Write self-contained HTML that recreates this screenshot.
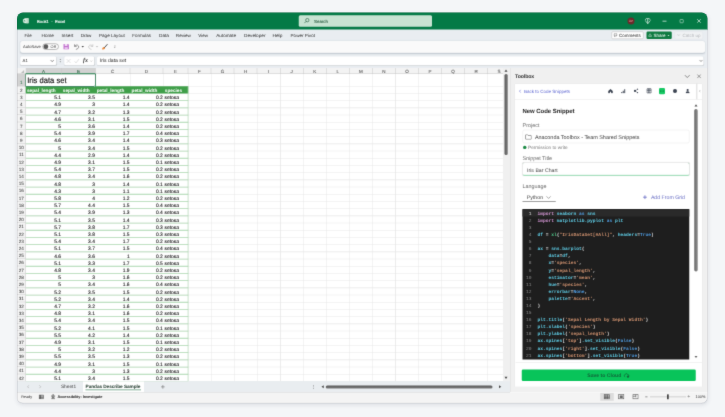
<!DOCTYPE html>
<html><head><meta charset="utf-8"><title>Excel</title>
<style>
*{box-sizing:border-box;margin:0;padding:0}
html,body{width:725px;height:417px;overflow:hidden}
#soften{position:absolute;left:0;top:0;width:725px;height:417px;filter:url(#soft)}
#scale{position:absolute;left:0;top:0;width:2900px;height:1668px;transform:scale(.25);transform-origin:0 0}
body{text-rendering:geometricPrecision;-webkit-font-smoothing:antialiased;background:#f4f6f8;font-family:"Liberation Sans",sans-serif;position:relative;color:#222}
.abs{position:absolute}
#win{position:absolute;left:68px;top:50px;width:2761.6px;height:1563.2px;border-radius:24px;overflow:hidden;background:#f0f0f0;box-shadow:0 6px 16px rgba(70,80,100,.14),0 0 4px rgba(100,110,130,.1)}
#inner{position:absolute;left:-68px;top:-50px;width:2900px;height:1668px}
.t{position:absolute;white-space:nowrap;line-height:1}
.menu{font-size:18px;color:#262626;top:131.6px}
.ch{position:absolute;top:272px;height:24px;font-size:18px;color:#262626;-webkit-text-stroke:0.24px #333;text-align:center;line-height:24.8px;border-right:2px solid #c9c9c9}
.rh{position:absolute;left:68px;width:34.8px;font-size:18.4px;color:#2c2c2c;text-align:center;border-bottom:2px solid #cfcfcf}
.vl{position:absolute;width:2.2px;background:#e6e6e6}
.hl{position:absolute;height:2.2px;background:#e6e6e6}
.c{position:absolute;font-size:19.6px;line-height:33.2px;height:28.8px;color:#111;white-space:nowrap;-webkit-text-stroke:0.4px #222}
.r{text-align:right;padding-right:2.4px}
.l{text-align:left;padding-left:4.8px}
.gh{position:absolute;font-size:18.8px;font-weight:bold;color:#fff;text-align:center;line-height:34.4px;height:28.8px;white-space:nowrap}
.code{position:absolute;left:2149.6px;font-family:"Liberation Mono",monospace;font-size:18.48px;line-height:28.34px;white-space:pre;color:#e0e0e0;font-weight:bold}
.ln{position:absolute;left:2090.4px;width:36px;text-align:right;font-family:"Liberation Mono",monospace;font-size:18.48px;line-height:28.34px;color:#8a8a8a;white-space:pre}
.k{color:#cc90cc}.v{color:#5fcde6}.b{color:#4f9be0}.s{color:#d0926f}.f{color:#4ec98a}.w{color:#d4d4d4}
.lbl{font-size:21.6px;color:#6a6a6a}
</style></head><body>
<svg width="0" height="0" style="position:absolute"><filter id="soft" x="0" y="0" width="100%" height="100%" color-interpolation-filters="sRGB"><feConvolveMatrix order="3" kernelMatrix="0.018 0.135 0.018 0.135 1 0.135 0.018 0.135 0.018" edgeMode="duplicate" preserveAlpha="true"/></filter></svg>
<div id="soften"><div id="scale"><div id="win"><div id="inner">

<div class="abs" style="left:68px;top:48px;width:2764px;height:71.6px;background:#047a46"></div>
<svg class="abs" style="left:90.4px;top:71.6px" width="25.6" height="22.8" viewBox="0 0 15 14"><rect x="4" y="0.5" width="10.5" height="13" rx="1" fill="#e6f2ea"/><rect x="9" y="0.5" width="5.5" height="13" fill="#b9dcc6"/><rect x="0.5" y="3" width="8" height="8" rx="1" fill="#e9f5ee"/><path d="M2.5 4.8 L6.5 9.2 M6.5 4.8 L2.5 9.2" stroke="#0b7a41" stroke-width="1.3"/></svg>
<div class="t" style="left:148px;top:78px;font-size:16.8px;color:#fff;-webkit-text-stroke:0.48px #fff">Book1&nbsp; -&nbsp; Excel</div>
<div class="abs" style="left:1195.2px;top:61.2px;width:532.4px;height:46px;border-radius:6px;background:#c8e3d2"></div>
<svg class="abs" style="left:1215.2px;top:71.2px" width="24" height="24" viewBox="0 0 10 10"><circle cx="6" cy="4" r="2.8" fill="none" stroke="#2a6145" stroke-width="1.1"/><path d="M4 6 L1 9" stroke="#2a6145" stroke-width="1.1"/></svg>
<div class="t" style="left:1256px;top:76px;font-size:17.6px;color:#2a5d42;-webkit-text-stroke:0.32px #2a5d42">Search</div>
<div class="abs" style="left:2509.6px;top:69.6px;width:28.8px;height:28.8px;border-radius:50%;background:#6c2a2b"></div>
<div class="t" style="left:2514.8px;top:78.4px;font-size:12.4px;color:#e7a3a3">OP</div>
<svg class="abs" style="left:2579.2px;top:72px" width="24" height="24" viewBox="0 0 12 12"><path d="M3 1 H9 L11.5 4.5 L6 11.5 L0.5 4.5 Z" fill="none" stroke="#e4f3ea" stroke-width="1.3"/><path d="M6 2 V11" stroke="#e4f3ea" stroke-width="1.6"/></svg>
<div class="abs" style="left:2650.4px;top:82.8px;width:16px;height:2.8px;background:#dff0e6"></div>
<div class="abs" style="left:2718.8px;top:76.8px;width:15.2px;height:15.2px;border:2.8px solid #dff0e6;border-radius:3.2px"></div>
<svg class="abs" style="left:2787.2px;top:75.2px" width="17.6" height="17.6" viewBox="0 0 10 10"><path d="M1 1 L9 9 M9 1 L1 9" stroke="#e8f5ed" stroke-width="1.6"/></svg>
<div class="abs" style="left:68px;top:118.4px;width:2764px;height:153.6px;background:#e9edf1"></div>
<div class="t menu" style="left:78.4px;width:68px;text-align:center"><span style="display:inline-block;transform:scaleX(0.966)">File</span></div>
<div class="t menu" style="left:146px;width:89.6px;text-align:center"><span style="display:inline-block;transform:scaleX(1.033)">Home</span></div>
<div class="t menu" style="left:225.6px;width:87.6px;text-align:center"><span style="display:inline-block;transform:scaleX(1.057)">Insert</span></div>
<div class="t menu" style="left:302.8px;width:82.4px;text-align:center"><span style="display:inline-block;transform:scaleX(1.010)">Draw</span></div>
<div class="t menu" style="left:376.4px;width:143.2px;text-align:center"><span style="display:inline-block;transform:scaleX(1.021)">Page Layout</span></div>
<div class="t menu" style="left:510px;width:114px;text-align:center"><span style="display:inline-block;transform:scaleX(0.987)">Formulas</span></div>
<div class="t menu" style="left:616px;width:80px;text-align:center"><span style="display:inline-block;transform:scaleX(1.052)">Data</span></div>
<div class="t menu" style="left:684px;width:100px;text-align:center"><span style="display:inline-block;transform:scaleX(1.017)">Review</span></div>
<div class="t menu" style="left:772.8px;width:78.8px;text-align:center"><span style="display:inline-block;transform:scaleX(0.995)">View</span></div>
<div class="t menu" style="left:844.8px;width:119.6px;text-align:center"><span style="display:inline-block;transform:scaleX(1.033)">Automate</span></div>
<div class="t menu" style="left:956.4px;width:125.6px;text-align:center"><span style="display:inline-block;transform:scaleX(1.044)">Developer</span></div>
<div class="t menu" style="left:1070px;width:80px;text-align:center"><span style="display:inline-block;transform:scaleX(1.081)">Help</span></div>
<div class="t menu" style="left:1142px;width:137.6px;text-align:center"><span style="display:inline-block;transform:scaleX(1.016)">Power Pivot</span></div>
<div class="abs" style="left:2445.6px;top:126px;width:128px;height:30.4px;border:2px solid #bdbdbd;border-radius:4.8px;background:#fff"></div>
<svg class="abs" style="left:2454px;top:132.8px" width="16" height="16" viewBox="0 0 8 8"><path d="M1 1 H7 V5 H4 L2.5 6.8 V5 H1 Z" fill="none" stroke="#444" stroke-width=".9"/></svg>
<div class="t" style="left:2476px;top:132px;font-size:18px;color:#222">Comments</div>
<div class="abs" style="left:2586px;top:126px;width:101.2px;height:30.4px;border-radius:4.8px;background:#0f7b41"></div>
<svg class="abs" style="left:2593.2px;top:132.8px" width="16" height="16" viewBox="0 0 8 8"><path d="M1 3.5 V7 H6 V3.5 M3.5 5 V1 M2 2.5 L3.5 1 L5 2.5" fill="none" stroke="#fff" stroke-width=".9"/></svg>
<div class="t" style="left:2614.4px;top:132px;font-size:18px;color:#fff">Share</div>
<div class="abs" style="left:2670.4px;top:140px;width:0;height:0;border-left:4px solid transparent;border-right:4px solid transparent;border-top:4.8px solid #fff"></div>
<div class="abs" style="left:2698.8px;top:126px;width:112px;height:30.4px;border-radius:4.8px;background:#f0f2f4;border:1.6px solid #dde0e4"></div>
<svg class="abs" style="left:2706.4px;top:134.4px" width="16" height="13.6" viewBox="0 0 8 7"><path d="M.5 4 L2.5 2 L4.5 4.5 L7.5 1.5" fill="none" stroke="#b9bbbf" stroke-width=".9"/></svg><div class="t" style="left:2730px;top:132px;font-size:18px;color:#b4b6ba">Catch up</div>
<div class="abs" style="left:80.8px;top:164px;width:2738.8px;height:47.2px;border-radius:10px;background:#fafafa;box-shadow:0 3.2px 5.6px rgba(40,60,80,.2)"></div>
<div class="t" style="left:92px;top:178.8px;font-size:16.4px;color:#333">AutoSave</div>
<div class="abs" style="left:170.4px;top:173.6px;width:64.8px;height:25.6px;border:2.2px solid #7c7c7c;border-radius:12.8px;background:#fcfcfc"></div>
<div class="abs" style="left:174.4px;top:177.2px;width:18.4px;height:18.4px;border-radius:50%;background:#5a5a5a"></div>
<div class="t" style="left:202.4px;top:179.6px;font-size:15.6px;color:#444">Off</div>
<svg class="abs" style="left:252px;top:174.4px" width="25.6" height="25.6" viewBox="0 0 12 12"><path d="M1 1 H9.5 L11 2.5 V11 H1 Z" fill="#c070cc"/><rect x="3.2" y="1" width="5" height="3.4" fill="#f6e6f8"/><rect x="3" y="6.8" width="6" height="4.2" fill="#e9c4ef"/></svg>
<svg class="abs" style="left:293.6px;top:174.4px" width="25.6" height="25.6" viewBox="0 0 12 12"><path d="M2 1.5 V5.5 H6 M2.3 5.2 C4 2.5 8 2 9.5 4.8 C11 8 7.5 10.5 4.5 11" fill="none" stroke="#454545" stroke-width="1"/></svg>
<div class="abs" style="left:326.4px;top:183.6px;width:0;height:0;border-left:5.2px solid transparent;border-right:5.2px solid transparent;border-top:6px solid #4a4a4a"></div>
<svg class="abs" style="left:350.4px;top:174.4px" width="25.6" height="25.6" viewBox="0 0 12 12"><path d="M10 1.5 V5.5 H6 M9.7 5.2 C8 2.5 4 2 2.5 4.8 C1 8 4.5 10.5 7.5 11" fill="none" stroke="#b5b5b5" stroke-width="1.1"/></svg>
<div class="abs" style="left:383.2px;top:183.6px;width:0;height:0;border-left:5.2px solid transparent;border-right:5.2px solid transparent;border-top:6px solid #c4c4c4"></div>
<svg class="abs" style="left:405.6px;top:173.6px" width="26.4" height="26.4" viewBox="0 0 12 12"><path d="M1.2 11 C.8 7.8 3.6 5.6 6 7 C7.6 9.6 5 11.6 1.2 11 Z" fill="#ee8a3a"/><path d="M5.6 7.2 L10.4 1.8" stroke="#4a4a4a" stroke-width="1.8" stroke-linecap="round"/></svg>
<div class="abs" style="left:456px;top:182.8px;width:7.2px;height:1.8px;background:#888"></div>
<div class="abs" style="left:456px;top:188.4px;width:0;height:0;border-left:3.2px solid transparent;border-right:3.2px solid transparent;border-top:4px solid #888"></div>
<div class="abs" style="left:81.2px;top:226px;width:143.6px;height:34.4px;border-radius:6px;background:#fff;box-shadow:0 2px 3.2px rgba(0,0,0,.12)"></div>
<div class="t" style="left:90.4px;top:235.2px;font-size:17.2px;color:#333">A1</div>
<svg class="abs" style="left:200px;top:238.4px" width="17.6" height="11.6" viewBox="0 0 7 5"><path d="M.7 .8 L3.5 3.8 L6.3 .8" fill="none" stroke="#444" stroke-width="1"/></svg>
<div class="abs" style="left:239.2px;top:236.4px;width:3.6px;height:3.6px;border-radius:50%;background:#555"></div><div class="abs" style="left:239.2px;top:245.2px;width:3.6px;height:3.6px;border-radius:50%;background:#555"></div>
<div class="abs" style="left:256.8px;top:226.4px;width:120px;height:34.4px;border-radius:6px;background:#fff;box-shadow:0 2px 3.2px rgba(0,0,0,.12)"></div>
<svg class="abs" style="left:263.6px;top:234px" width="20" height="20" viewBox="0 0 8 8"><path d="M1 1 L7 7 M7 1 L1 7" stroke="#c2c2c2" stroke-width=".8"/></svg>
<svg class="abs" style="left:295.2px;top:233.6px" width="24" height="20" viewBox="0 0 9 8"><path d="M1 4.5 L3.3 7 L8 1" fill="none" stroke="#c2c2c2" stroke-width=".8"/></svg>
<div class="t" style="left:332px;top:230.4px;font-size:23.6px;font-style:italic;font-weight:bold;font-family:'Liberation Serif',serif;color:#333">fx</div>
<svg class="abs" style="left:359.2px;top:239.6px" width="12" height="8.8" viewBox="0 0 7 5"><path d="M.7 .8 L3.5 3.8 L6.3 .8" fill="none" stroke="#999" stroke-width=".9"/></svg>
<div class="abs" style="left:388px;top:226.4px;width:2426.4px;height:34.4px;border-radius:6px;background:#fff;box-shadow:0 2px 3.2px rgba(0,0,0,.12)"></div>
<div class="t" style="left:399.2px;top:232px;font-size:20.4px;color:#2a2a2a">Iris data set</div>
<svg class="abs" style="left:2796px;top:238.4px" width="16" height="10.8" viewBox="0 0 7 5"><path d="M.7 .8 L3.5 3.8 L6.3 .8" fill="none" stroke="#4a4a4a" stroke-width="1"/></svg>
<div class="abs" style="left:68px;top:272px;width:1944px;height:1253.2px;background:#fff"></div>
<div class="abs" style="left:68px;top:272px;width:1944px;height:24px;background:#f3f3f3;border-bottom:2px solid #c9c9c9"></div>
<div class="abs" style="left:68px;top:296px;width:34.8px;height:1229.2px;background:#f3f3f3;border-right:2px solid #c9c9c9"></div>
<svg class="abs" style="left:82px;top:278px" width="16" height="16" viewBox="0 0 8 8"><path d="M7.5 .5 V7.5 H.5 Z" fill="#bdbdbd"/></svg>
<div class="abs" style="left:102.8px;top:272px;width:279.2px;height:24px;background:#d2d2d2;border-bottom:3.2px solid #107c41"></div>
<div class="ch" style="left:102.8px;width:143.6px;color:#1e6b3f">A</div>
<div class="ch" style="left:246.4px;width:135.6px;color:#1e6b3f">B</div>
<div class="ch" style="left:382px;width:138.8px;color:#555">C</div>
<div class="ch" style="left:520.8px;width:132.4px;color:#555">D</div>
<div class="ch" style="left:653.2px;width:99.6px;color:#555">E</div>
<div class="ch" style="left:752.8px;width:92.2px;color:#555">F</div>
<div class="ch" style="left:845px;width:92.2px;color:#555">G</div>
<div class="ch" style="left:937.2px;width:92.2px;color:#555">H</div>
<div class="ch" style="left:1029.4px;width:92.2px;color:#555">I</div>
<div class="ch" style="left:1121.6px;width:92.2px;color:#555">J</div>
<div class="ch" style="left:1213.8px;width:92.2px;color:#555">K</div>
<div class="ch" style="left:1306px;width:92.2px;color:#555">L</div>
<div class="ch" style="left:1398.2px;width:92.2px;color:#555">M</div>
<div class="ch" style="left:1490.4px;width:92.2px;color:#555">N</div>
<div class="ch" style="left:1582.6px;width:92.2px;color:#555">O</div>
<div class="ch" style="left:1674.8px;width:92.2px;color:#555">P</div>
<div class="ch" style="left:1767px;width:92.2px;color:#555">Q</div>
<div class="ch" style="left:1859.2px;width:92.2px;color:#555">R</div>
<div class="ch" style="left:1951.4px;width:92.2px;color:#555">S</div>
<div class="vl" style="left:245.2px;top:296px;height:49.2px"></div>
<div class="vl" style="left:380.8px;top:296px;height:49.2px"></div>
<div class="vl" style="left:519.6px;top:296px;height:49.2px"></div>
<div class="vl" style="left:652px;top:296px;height:49.2px"></div>
<div class="vl" style="left:751.6px;top:296px;height:1229.2px"></div>
<div class="vl" style="left:843.8px;top:296px;height:1229.2px"></div>
<div class="vl" style="left:936px;top:296px;height:1229.2px"></div>
<div class="vl" style="left:1028.2px;top:296px;height:1229.2px"></div>
<div class="vl" style="left:1120.4px;top:296px;height:1229.2px"></div>
<div class="vl" style="left:1212.6px;top:296px;height:1229.2px"></div>
<div class="vl" style="left:1304.8px;top:296px;height:1229.2px"></div>
<div class="vl" style="left:1397px;top:296px;height:1229.2px"></div>
<div class="vl" style="left:1489.2px;top:296px;height:1229.2px"></div>
<div class="vl" style="left:1581.4px;top:296px;height:1229.2px"></div>
<div class="vl" style="left:1673.6px;top:296px;height:1229.2px"></div>
<div class="vl" style="left:1765.8px;top:296px;height:1229.2px"></div>
<div class="vl" style="left:1858px;top:296px;height:1229.2px"></div>
<div class="vl" style="left:1950.2px;top:296px;height:1229.2px"></div>
<div class="hl" style="left:102.8px;top:344px;width:1909.2px"></div>
<div class="rh" style="top:296px;height:49.2px;line-height:63.2px; background:#d2d2d2;color:#1e6b3f;">1</div>
<div class="hl" style="left:102.8px;top:372.8px;width:1909.2px"></div>
<div class="rh" style="top:345.2px;height:28.8px;line-height:30.4px;">2</div>
<div class="hl" style="left:102.8px;top:401.6px;width:1909.2px"></div>
<div class="rh" style="top:374px;height:28.8px;line-height:30.4px;">3</div>
<div class="hl" style="left:102.8px;top:430.4px;width:1909.2px"></div>
<div class="rh" style="top:402.8px;height:28.8px;line-height:30.4px;">4</div>
<div class="hl" style="left:102.8px;top:459.2px;width:1909.2px"></div>
<div class="rh" style="top:431.6px;height:28.8px;line-height:30.4px;">5</div>
<div class="hl" style="left:102.8px;top:488px;width:1909.2px"></div>
<div class="rh" style="top:460.4px;height:28.8px;line-height:30.4px;">6</div>
<div class="hl" style="left:102.8px;top:516.8px;width:1909.2px"></div>
<div class="rh" style="top:489.2px;height:28.8px;line-height:30.4px;">7</div>
<div class="hl" style="left:102.8px;top:545.6px;width:1909.2px"></div>
<div class="rh" style="top:518px;height:28.8px;line-height:30.4px;">8</div>
<div class="hl" style="left:102.8px;top:574.4px;width:1909.2px"></div>
<div class="rh" style="top:546.8px;height:28.8px;line-height:30.4px;">9</div>
<div class="hl" style="left:102.8px;top:603.2px;width:1909.2px"></div>
<div class="rh" style="top:575.6px;height:28.8px;line-height:30.4px;">10</div>
<div class="hl" style="left:102.8px;top:632px;width:1909.2px"></div>
<div class="rh" style="top:604.4px;height:28.8px;line-height:30.4px;">11</div>
<div class="hl" style="left:102.8px;top:660.8px;width:1909.2px"></div>
<div class="rh" style="top:633.2px;height:28.8px;line-height:30.4px;">12</div>
<div class="hl" style="left:102.8px;top:689.6px;width:1909.2px"></div>
<div class="rh" style="top:662px;height:28.8px;line-height:30.4px;">13</div>
<div class="hl" style="left:102.8px;top:718.4px;width:1909.2px"></div>
<div class="rh" style="top:690.8px;height:28.8px;line-height:30.4px;">14</div>
<div class="hl" style="left:102.8px;top:747.2px;width:1909.2px"></div>
<div class="rh" style="top:719.6px;height:28.8px;line-height:30.4px;">15</div>
<div class="hl" style="left:102.8px;top:776px;width:1909.2px"></div>
<div class="rh" style="top:748.4px;height:28.8px;line-height:30.4px;">16</div>
<div class="hl" style="left:102.8px;top:804.8px;width:1909.2px"></div>
<div class="rh" style="top:777.2px;height:28.8px;line-height:30.4px;">17</div>
<div class="hl" style="left:102.8px;top:833.6px;width:1909.2px"></div>
<div class="rh" style="top:806px;height:28.8px;line-height:30.4px;">18</div>
<div class="hl" style="left:102.8px;top:862.4px;width:1909.2px"></div>
<div class="rh" style="top:834.8px;height:28.8px;line-height:30.4px;">19</div>
<div class="hl" style="left:102.8px;top:891.2px;width:1909.2px"></div>
<div class="rh" style="top:863.6px;height:28.8px;line-height:30.4px;">20</div>
<div class="hl" style="left:102.8px;top:920px;width:1909.2px"></div>
<div class="rh" style="top:892.4px;height:28.8px;line-height:30.4px;">21</div>
<div class="hl" style="left:102.8px;top:948.8px;width:1909.2px"></div>
<div class="rh" style="top:921.2px;height:28.8px;line-height:30.4px;">22</div>
<div class="hl" style="left:102.8px;top:977.6px;width:1909.2px"></div>
<div class="rh" style="top:950px;height:28.8px;line-height:30.4px;">23</div>
<div class="hl" style="left:102.8px;top:1006.4px;width:1909.2px"></div>
<div class="rh" style="top:978.8px;height:28.8px;line-height:30.4px;">24</div>
<div class="hl" style="left:102.8px;top:1035.2px;width:1909.2px"></div>
<div class="rh" style="top:1007.6px;height:28.8px;line-height:30.4px;">25</div>
<div class="hl" style="left:102.8px;top:1064px;width:1909.2px"></div>
<div class="rh" style="top:1036.4px;height:28.8px;line-height:30.4px;">26</div>
<div class="hl" style="left:102.8px;top:1092.8px;width:1909.2px"></div>
<div class="rh" style="top:1065.2px;height:28.8px;line-height:30.4px;">27</div>
<div class="hl" style="left:102.8px;top:1121.6px;width:1909.2px"></div>
<div class="rh" style="top:1094px;height:28.8px;line-height:30.4px;">28</div>
<div class="hl" style="left:102.8px;top:1150.4px;width:1909.2px"></div>
<div class="rh" style="top:1122.8px;height:28.8px;line-height:30.4px;">29</div>
<div class="hl" style="left:102.8px;top:1179.2px;width:1909.2px"></div>
<div class="rh" style="top:1151.6px;height:28.8px;line-height:30.4px;">30</div>
<div class="hl" style="left:102.8px;top:1208px;width:1909.2px"></div>
<div class="rh" style="top:1180.4px;height:28.8px;line-height:30.4px;">31</div>
<div class="hl" style="left:102.8px;top:1236.8px;width:1909.2px"></div>
<div class="rh" style="top:1209.2px;height:28.8px;line-height:30.4px;">32</div>
<div class="hl" style="left:102.8px;top:1265.6px;width:1909.2px"></div>
<div class="rh" style="top:1238px;height:28.8px;line-height:30.4px;">33</div>
<div class="hl" style="left:102.8px;top:1294.4px;width:1909.2px"></div>
<div class="rh" style="top:1266.8px;height:28.8px;line-height:30.4px;">34</div>
<div class="hl" style="left:102.8px;top:1323.2px;width:1909.2px"></div>
<div class="rh" style="top:1295.6px;height:28.8px;line-height:30.4px;">35</div>
<div class="hl" style="left:102.8px;top:1352px;width:1909.2px"></div>
<div class="rh" style="top:1324.4px;height:28.8px;line-height:30.4px;">36</div>
<div class="hl" style="left:102.8px;top:1380.8px;width:1909.2px"></div>
<div class="rh" style="top:1353.2px;height:28.8px;line-height:30.4px;">37</div>
<div class="hl" style="left:102.8px;top:1409.6px;width:1909.2px"></div>
<div class="rh" style="top:1382px;height:28.8px;line-height:30.4px;">38</div>
<div class="hl" style="left:102.8px;top:1438.4px;width:1909.2px"></div>
<div class="rh" style="top:1410.8px;height:28.8px;line-height:30.4px;">39</div>
<div class="hl" style="left:102.8px;top:1467.2px;width:1909.2px"></div>
<div class="rh" style="top:1439.6px;height:28.8px;line-height:30.4px;">40</div>
<div class="hl" style="left:102.8px;top:1496px;width:1909.2px"></div>
<div class="rh" style="top:1468.4px;height:28.8px;line-height:30.4px;">41</div>
<div class="hl" style="left:102.8px;top:1524.8px;width:1909.2px"></div>
<div class="rh" style="top:1497.2px;height:28.8px;line-height:30.4px;">42</div>
<div class="abs" style="left:102.8px;top:345.2px;width:650px;height:28.8px;background:#3f9f49"></div>
<div class="gh" style="left:93.6px;top:345.2px;width:143.6px">sepal_length</div>
<div class="gh" style="left:237.2px;top:345.2px;width:135.6px">sepal_width</div>
<div class="gh" style="left:372.8px;top:345.2px;width:138.8px">petal_length</div>
<div class="gh" style="left:511.6px;top:345.2px;width:132.4px">petal_width</div>
<div class="gh" style="left:644px;top:345.2px;width:99.6px">species</div>
<div class="abs" style="left:102.8px;top:401px;width:650px;height:3.2px;background:#aedab2"></div>
<div class="c r" style="left:102.8px;top:374px;width:143.6px">5.1</div>
<div class="c r" style="left:246.4px;top:374px;width:135.6px">3.5</div>
<div class="c r" style="left:382px;top:374px;width:138.8px">1.4</div>
<div class="c r" style="left:520.8px;top:374px;width:132.4px">0.2</div>
<div class="c l" style="left:653.2px;top:374px;width:99.6px">setosa</div>
<div class="abs" style="left:102.8px;top:429.8px;width:650px;height:3.2px;background:#aedab2"></div>
<div class="c r" style="left:102.8px;top:402.8px;width:143.6px">4.9</div>
<div class="c r" style="left:246.4px;top:402.8px;width:135.6px">3</div>
<div class="c r" style="left:382px;top:402.8px;width:138.8px">1.4</div>
<div class="c r" style="left:520.8px;top:402.8px;width:132.4px">0.2</div>
<div class="c l" style="left:653.2px;top:402.8px;width:99.6px">setosa</div>
<div class="abs" style="left:102.8px;top:458.6px;width:650px;height:3.2px;background:#aedab2"></div>
<div class="c r" style="left:102.8px;top:431.6px;width:143.6px">4.7</div>
<div class="c r" style="left:246.4px;top:431.6px;width:135.6px">3.2</div>
<div class="c r" style="left:382px;top:431.6px;width:138.8px">1.3</div>
<div class="c r" style="left:520.8px;top:431.6px;width:132.4px">0.2</div>
<div class="c l" style="left:653.2px;top:431.6px;width:99.6px">setosa</div>
<div class="abs" style="left:102.8px;top:487.4px;width:650px;height:3.2px;background:#aedab2"></div>
<div class="c r" style="left:102.8px;top:460.4px;width:143.6px">4.6</div>
<div class="c r" style="left:246.4px;top:460.4px;width:135.6px">3.1</div>
<div class="c r" style="left:382px;top:460.4px;width:138.8px">1.5</div>
<div class="c r" style="left:520.8px;top:460.4px;width:132.4px">0.2</div>
<div class="c l" style="left:653.2px;top:460.4px;width:99.6px">setosa</div>
<div class="abs" style="left:102.8px;top:516.2px;width:650px;height:3.2px;background:#aedab2"></div>
<div class="c r" style="left:102.8px;top:489.2px;width:143.6px">5</div>
<div class="c r" style="left:246.4px;top:489.2px;width:135.6px">3.6</div>
<div class="c r" style="left:382px;top:489.2px;width:138.8px">1.4</div>
<div class="c r" style="left:520.8px;top:489.2px;width:132.4px">0.2</div>
<div class="c l" style="left:653.2px;top:489.2px;width:99.6px">setosa</div>
<div class="abs" style="left:102.8px;top:545px;width:650px;height:3.2px;background:#aedab2"></div>
<div class="c r" style="left:102.8px;top:518px;width:143.6px">5.4</div>
<div class="c r" style="left:246.4px;top:518px;width:135.6px">3.9</div>
<div class="c r" style="left:382px;top:518px;width:138.8px">1.7</div>
<div class="c r" style="left:520.8px;top:518px;width:132.4px">0.4</div>
<div class="c l" style="left:653.2px;top:518px;width:99.6px">setosa</div>
<div class="abs" style="left:102.8px;top:573.8px;width:650px;height:3.2px;background:#aedab2"></div>
<div class="c r" style="left:102.8px;top:546.8px;width:143.6px">4.6</div>
<div class="c r" style="left:246.4px;top:546.8px;width:135.6px">3.4</div>
<div class="c r" style="left:382px;top:546.8px;width:138.8px">1.4</div>
<div class="c r" style="left:520.8px;top:546.8px;width:132.4px">0.3</div>
<div class="c l" style="left:653.2px;top:546.8px;width:99.6px">setosa</div>
<div class="abs" style="left:102.8px;top:602.6px;width:650px;height:3.2px;background:#aedab2"></div>
<div class="c r" style="left:102.8px;top:575.6px;width:143.6px">5</div>
<div class="c r" style="left:246.4px;top:575.6px;width:135.6px">3.4</div>
<div class="c r" style="left:382px;top:575.6px;width:138.8px">1.5</div>
<div class="c r" style="left:520.8px;top:575.6px;width:132.4px">0.2</div>
<div class="c l" style="left:653.2px;top:575.6px;width:99.6px">setosa</div>
<div class="abs" style="left:102.8px;top:631.4px;width:650px;height:3.2px;background:#aedab2"></div>
<div class="c r" style="left:102.8px;top:604.4px;width:143.6px">4.4</div>
<div class="c r" style="left:246.4px;top:604.4px;width:135.6px">2.9</div>
<div class="c r" style="left:382px;top:604.4px;width:138.8px">1.4</div>
<div class="c r" style="left:520.8px;top:604.4px;width:132.4px">0.2</div>
<div class="c l" style="left:653.2px;top:604.4px;width:99.6px">setosa</div>
<div class="abs" style="left:102.8px;top:660.2px;width:650px;height:3.2px;background:#aedab2"></div>
<div class="c r" style="left:102.8px;top:633.2px;width:143.6px">4.9</div>
<div class="c r" style="left:246.4px;top:633.2px;width:135.6px">3.1</div>
<div class="c r" style="left:382px;top:633.2px;width:138.8px">1.5</div>
<div class="c r" style="left:520.8px;top:633.2px;width:132.4px">0.1</div>
<div class="c l" style="left:653.2px;top:633.2px;width:99.6px">setosa</div>
<div class="abs" style="left:102.8px;top:689px;width:650px;height:3.2px;background:#aedab2"></div>
<div class="c r" style="left:102.8px;top:662px;width:143.6px">5.4</div>
<div class="c r" style="left:246.4px;top:662px;width:135.6px">3.7</div>
<div class="c r" style="left:382px;top:662px;width:138.8px">1.5</div>
<div class="c r" style="left:520.8px;top:662px;width:132.4px">0.2</div>
<div class="c l" style="left:653.2px;top:662px;width:99.6px">setosa</div>
<div class="abs" style="left:102.8px;top:717.8px;width:650px;height:3.2px;background:#aedab2"></div>
<div class="c r" style="left:102.8px;top:690.8px;width:143.6px">4.8</div>
<div class="c r" style="left:246.4px;top:690.8px;width:135.6px">3.4</div>
<div class="c r" style="left:382px;top:690.8px;width:138.8px">1.6</div>
<div class="c r" style="left:520.8px;top:690.8px;width:132.4px">0.2</div>
<div class="c l" style="left:653.2px;top:690.8px;width:99.6px">setosa</div>
<div class="abs" style="left:102.8px;top:746.6px;width:650px;height:3.2px;background:#aedab2"></div>
<div class="c r" style="left:102.8px;top:719.6px;width:143.6px">4.8</div>
<div class="c r" style="left:246.4px;top:719.6px;width:135.6px">3</div>
<div class="c r" style="left:382px;top:719.6px;width:138.8px">1.4</div>
<div class="c r" style="left:520.8px;top:719.6px;width:132.4px">0.1</div>
<div class="c l" style="left:653.2px;top:719.6px;width:99.6px">setosa</div>
<div class="abs" style="left:102.8px;top:775.4px;width:650px;height:3.2px;background:#aedab2"></div>
<div class="c r" style="left:102.8px;top:748.4px;width:143.6px">4.3</div>
<div class="c r" style="left:246.4px;top:748.4px;width:135.6px">3</div>
<div class="c r" style="left:382px;top:748.4px;width:138.8px">1.1</div>
<div class="c r" style="left:520.8px;top:748.4px;width:132.4px">0.1</div>
<div class="c l" style="left:653.2px;top:748.4px;width:99.6px">setosa</div>
<div class="abs" style="left:102.8px;top:804.2px;width:650px;height:3.2px;background:#aedab2"></div>
<div class="c r" style="left:102.8px;top:777.2px;width:143.6px">5.8</div>
<div class="c r" style="left:246.4px;top:777.2px;width:135.6px">4</div>
<div class="c r" style="left:382px;top:777.2px;width:138.8px">1.2</div>
<div class="c r" style="left:520.8px;top:777.2px;width:132.4px">0.2</div>
<div class="c l" style="left:653.2px;top:777.2px;width:99.6px">setosa</div>
<div class="abs" style="left:102.8px;top:833px;width:650px;height:3.2px;background:#aedab2"></div>
<div class="c r" style="left:102.8px;top:806px;width:143.6px">5.7</div>
<div class="c r" style="left:246.4px;top:806px;width:135.6px">4.4</div>
<div class="c r" style="left:382px;top:806px;width:138.8px">1.5</div>
<div class="c r" style="left:520.8px;top:806px;width:132.4px">0.4</div>
<div class="c l" style="left:653.2px;top:806px;width:99.6px">setosa</div>
<div class="abs" style="left:102.8px;top:861.8px;width:650px;height:3.2px;background:#aedab2"></div>
<div class="c r" style="left:102.8px;top:834.8px;width:143.6px">5.4</div>
<div class="c r" style="left:246.4px;top:834.8px;width:135.6px">3.9</div>
<div class="c r" style="left:382px;top:834.8px;width:138.8px">1.3</div>
<div class="c r" style="left:520.8px;top:834.8px;width:132.4px">0.4</div>
<div class="c l" style="left:653.2px;top:834.8px;width:99.6px">setosa</div>
<div class="abs" style="left:102.8px;top:890.6px;width:650px;height:3.2px;background:#aedab2"></div>
<div class="c r" style="left:102.8px;top:863.6px;width:143.6px">5.1</div>
<div class="c r" style="left:246.4px;top:863.6px;width:135.6px">3.5</div>
<div class="c r" style="left:382px;top:863.6px;width:138.8px">1.4</div>
<div class="c r" style="left:520.8px;top:863.6px;width:132.4px">0.3</div>
<div class="c l" style="left:653.2px;top:863.6px;width:99.6px">setosa</div>
<div class="abs" style="left:102.8px;top:919.4px;width:650px;height:3.2px;background:#aedab2"></div>
<div class="c r" style="left:102.8px;top:892.4px;width:143.6px">5.7</div>
<div class="c r" style="left:246.4px;top:892.4px;width:135.6px">3.8</div>
<div class="c r" style="left:382px;top:892.4px;width:138.8px">1.7</div>
<div class="c r" style="left:520.8px;top:892.4px;width:132.4px">0.3</div>
<div class="c l" style="left:653.2px;top:892.4px;width:99.6px">setosa</div>
<div class="abs" style="left:102.8px;top:948.2px;width:650px;height:3.2px;background:#aedab2"></div>
<div class="c r" style="left:102.8px;top:921.2px;width:143.6px">5.1</div>
<div class="c r" style="left:246.4px;top:921.2px;width:135.6px">3.8</div>
<div class="c r" style="left:382px;top:921.2px;width:138.8px">1.5</div>
<div class="c r" style="left:520.8px;top:921.2px;width:132.4px">0.3</div>
<div class="c l" style="left:653.2px;top:921.2px;width:99.6px">setosa</div>
<div class="abs" style="left:102.8px;top:977px;width:650px;height:3.2px;background:#aedab2"></div>
<div class="c r" style="left:102.8px;top:950px;width:143.6px">5.4</div>
<div class="c r" style="left:246.4px;top:950px;width:135.6px">3.4</div>
<div class="c r" style="left:382px;top:950px;width:138.8px">1.7</div>
<div class="c r" style="left:520.8px;top:950px;width:132.4px">0.2</div>
<div class="c l" style="left:653.2px;top:950px;width:99.6px">setosa</div>
<div class="abs" style="left:102.8px;top:1005.8px;width:650px;height:3.2px;background:#aedab2"></div>
<div class="c r" style="left:102.8px;top:978.8px;width:143.6px">5.1</div>
<div class="c r" style="left:246.4px;top:978.8px;width:135.6px">3.7</div>
<div class="c r" style="left:382px;top:978.8px;width:138.8px">1.5</div>
<div class="c r" style="left:520.8px;top:978.8px;width:132.4px">0.4</div>
<div class="c l" style="left:653.2px;top:978.8px;width:99.6px">setosa</div>
<div class="abs" style="left:102.8px;top:1034.6px;width:650px;height:3.2px;background:#aedab2"></div>
<div class="c r" style="left:102.8px;top:1007.6px;width:143.6px">4.6</div>
<div class="c r" style="left:246.4px;top:1007.6px;width:135.6px">3.6</div>
<div class="c r" style="left:382px;top:1007.6px;width:138.8px">1</div>
<div class="c r" style="left:520.8px;top:1007.6px;width:132.4px">0.2</div>
<div class="c l" style="left:653.2px;top:1007.6px;width:99.6px">setosa</div>
<div class="abs" style="left:102.8px;top:1063.4px;width:650px;height:3.2px;background:#aedab2"></div>
<div class="c r" style="left:102.8px;top:1036.4px;width:143.6px">5.1</div>
<div class="c r" style="left:246.4px;top:1036.4px;width:135.6px">3.3</div>
<div class="c r" style="left:382px;top:1036.4px;width:138.8px">1.7</div>
<div class="c r" style="left:520.8px;top:1036.4px;width:132.4px">0.5</div>
<div class="c l" style="left:653.2px;top:1036.4px;width:99.6px">setosa</div>
<div class="abs" style="left:102.8px;top:1092.2px;width:650px;height:3.2px;background:#aedab2"></div>
<div class="c r" style="left:102.8px;top:1065.2px;width:143.6px">4.8</div>
<div class="c r" style="left:246.4px;top:1065.2px;width:135.6px">3.4</div>
<div class="c r" style="left:382px;top:1065.2px;width:138.8px">1.9</div>
<div class="c r" style="left:520.8px;top:1065.2px;width:132.4px">0.2</div>
<div class="c l" style="left:653.2px;top:1065.2px;width:99.6px">setosa</div>
<div class="abs" style="left:102.8px;top:1121px;width:650px;height:3.2px;background:#aedab2"></div>
<div class="c r" style="left:102.8px;top:1094px;width:143.6px">5</div>
<div class="c r" style="left:246.4px;top:1094px;width:135.6px">3</div>
<div class="c r" style="left:382px;top:1094px;width:138.8px">1.6</div>
<div class="c r" style="left:520.8px;top:1094px;width:132.4px">0.2</div>
<div class="c l" style="left:653.2px;top:1094px;width:99.6px">setosa</div>
<div class="abs" style="left:102.8px;top:1149.8px;width:650px;height:3.2px;background:#aedab2"></div>
<div class="c r" style="left:102.8px;top:1122.8px;width:143.6px">5</div>
<div class="c r" style="left:246.4px;top:1122.8px;width:135.6px">3.4</div>
<div class="c r" style="left:382px;top:1122.8px;width:138.8px">1.6</div>
<div class="c r" style="left:520.8px;top:1122.8px;width:132.4px">0.4</div>
<div class="c l" style="left:653.2px;top:1122.8px;width:99.6px">setosa</div>
<div class="abs" style="left:102.8px;top:1178.6px;width:650px;height:3.2px;background:#aedab2"></div>
<div class="c r" style="left:102.8px;top:1151.6px;width:143.6px">5.2</div>
<div class="c r" style="left:246.4px;top:1151.6px;width:135.6px">3.5</div>
<div class="c r" style="left:382px;top:1151.6px;width:138.8px">1.5</div>
<div class="c r" style="left:520.8px;top:1151.6px;width:132.4px">0.2</div>
<div class="c l" style="left:653.2px;top:1151.6px;width:99.6px">setosa</div>
<div class="abs" style="left:102.8px;top:1207.4px;width:650px;height:3.2px;background:#aedab2"></div>
<div class="c r" style="left:102.8px;top:1180.4px;width:143.6px">5.2</div>
<div class="c r" style="left:246.4px;top:1180.4px;width:135.6px">3.4</div>
<div class="c r" style="left:382px;top:1180.4px;width:138.8px">1.4</div>
<div class="c r" style="left:520.8px;top:1180.4px;width:132.4px">0.2</div>
<div class="c l" style="left:653.2px;top:1180.4px;width:99.6px">setosa</div>
<div class="abs" style="left:102.8px;top:1236.2px;width:650px;height:3.2px;background:#aedab2"></div>
<div class="c r" style="left:102.8px;top:1209.2px;width:143.6px">4.7</div>
<div class="c r" style="left:246.4px;top:1209.2px;width:135.6px">3.2</div>
<div class="c r" style="left:382px;top:1209.2px;width:138.8px">1.6</div>
<div class="c r" style="left:520.8px;top:1209.2px;width:132.4px">0.2</div>
<div class="c l" style="left:653.2px;top:1209.2px;width:99.6px">setosa</div>
<div class="abs" style="left:102.8px;top:1265px;width:650px;height:3.2px;background:#aedab2"></div>
<div class="c r" style="left:102.8px;top:1238px;width:143.6px">4.8</div>
<div class="c r" style="left:246.4px;top:1238px;width:135.6px">3.1</div>
<div class="c r" style="left:382px;top:1238px;width:138.8px">1.6</div>
<div class="c r" style="left:520.8px;top:1238px;width:132.4px">0.2</div>
<div class="c l" style="left:653.2px;top:1238px;width:99.6px">setosa</div>
<div class="abs" style="left:102.8px;top:1293.8px;width:650px;height:3.2px;background:#aedab2"></div>
<div class="c r" style="left:102.8px;top:1266.8px;width:143.6px">5.4</div>
<div class="c r" style="left:246.4px;top:1266.8px;width:135.6px">3.4</div>
<div class="c r" style="left:382px;top:1266.8px;width:138.8px">1.5</div>
<div class="c r" style="left:520.8px;top:1266.8px;width:132.4px">0.4</div>
<div class="c l" style="left:653.2px;top:1266.8px;width:99.6px">setosa</div>
<div class="abs" style="left:102.8px;top:1322.6px;width:650px;height:3.2px;background:#aedab2"></div>
<div class="c r" style="left:102.8px;top:1295.6px;width:143.6px">5.2</div>
<div class="c r" style="left:246.4px;top:1295.6px;width:135.6px">4.1</div>
<div class="c r" style="left:382px;top:1295.6px;width:138.8px">1.5</div>
<div class="c r" style="left:520.8px;top:1295.6px;width:132.4px">0.1</div>
<div class="c l" style="left:653.2px;top:1295.6px;width:99.6px">setosa</div>
<div class="abs" style="left:102.8px;top:1351.4px;width:650px;height:3.2px;background:#aedab2"></div>
<div class="c r" style="left:102.8px;top:1324.4px;width:143.6px">5.5</div>
<div class="c r" style="left:246.4px;top:1324.4px;width:135.6px">4.2</div>
<div class="c r" style="left:382px;top:1324.4px;width:138.8px">1.4</div>
<div class="c r" style="left:520.8px;top:1324.4px;width:132.4px">0.2</div>
<div class="c l" style="left:653.2px;top:1324.4px;width:99.6px">setosa</div>
<div class="abs" style="left:102.8px;top:1380.2px;width:650px;height:3.2px;background:#aedab2"></div>
<div class="c r" style="left:102.8px;top:1353.2px;width:143.6px">4.9</div>
<div class="c r" style="left:246.4px;top:1353.2px;width:135.6px">3.1</div>
<div class="c r" style="left:382px;top:1353.2px;width:138.8px">1.5</div>
<div class="c r" style="left:520.8px;top:1353.2px;width:132.4px">0.1</div>
<div class="c l" style="left:653.2px;top:1353.2px;width:99.6px">setosa</div>
<div class="abs" style="left:102.8px;top:1409px;width:650px;height:3.2px;background:#aedab2"></div>
<div class="c r" style="left:102.8px;top:1382px;width:143.6px">5</div>
<div class="c r" style="left:246.4px;top:1382px;width:135.6px">3.2</div>
<div class="c r" style="left:382px;top:1382px;width:138.8px">1.2</div>
<div class="c r" style="left:520.8px;top:1382px;width:132.4px">0.2</div>
<div class="c l" style="left:653.2px;top:1382px;width:99.6px">setosa</div>
<div class="abs" style="left:102.8px;top:1437.8px;width:650px;height:3.2px;background:#aedab2"></div>
<div class="c r" style="left:102.8px;top:1410.8px;width:143.6px">5.5</div>
<div class="c r" style="left:246.4px;top:1410.8px;width:135.6px">3.5</div>
<div class="c r" style="left:382px;top:1410.8px;width:138.8px">1.3</div>
<div class="c r" style="left:520.8px;top:1410.8px;width:132.4px">0.2</div>
<div class="c l" style="left:653.2px;top:1410.8px;width:99.6px">setosa</div>
<div class="abs" style="left:102.8px;top:1466.6px;width:650px;height:3.2px;background:#aedab2"></div>
<div class="c r" style="left:102.8px;top:1439.6px;width:143.6px">4.9</div>
<div class="c r" style="left:246.4px;top:1439.6px;width:135.6px">3.1</div>
<div class="c r" style="left:382px;top:1439.6px;width:138.8px">1.5</div>
<div class="c r" style="left:520.8px;top:1439.6px;width:132.4px">0.1</div>
<div class="c l" style="left:653.2px;top:1439.6px;width:99.6px">setosa</div>
<div class="abs" style="left:102.8px;top:1495.4px;width:650px;height:3.2px;background:#aedab2"></div>
<div class="c r" style="left:102.8px;top:1468.4px;width:143.6px">4.4</div>
<div class="c r" style="left:246.4px;top:1468.4px;width:135.6px">3</div>
<div class="c r" style="left:382px;top:1468.4px;width:138.8px">1.3</div>
<div class="c r" style="left:520.8px;top:1468.4px;width:132.4px">0.2</div>
<div class="c l" style="left:653.2px;top:1468.4px;width:99.6px">setosa</div>
<div class="abs" style="left:102.8px;top:1524.2px;width:650px;height:3.2px;background:#aedab2"></div>
<div class="c r" style="left:102.8px;top:1497.2px;width:143.6px">5.1</div>
<div class="c r" style="left:246.4px;top:1497.2px;width:135.6px">3.4</div>
<div class="c r" style="left:382px;top:1497.2px;width:138.8px">1.5</div>
<div class="c r" style="left:520.8px;top:1497.2px;width:132.4px">0.2</div>
<div class="c l" style="left:653.2px;top:1497.2px;width:99.6px">setosa</div>
<div class="abs" style="left:750.8px;top:345.2px;width:3.6px;height:1180px;background:#a8d5ab"></div>
<div class="abs" style="left:101.2px;top:294.4px;width:282.4px;height:52.4px;border:3.4px solid #176b3c;background:#fff"></div>
<div class="t" style="left:109.2px;top:306.4px;font-size:32px;color:#0c0c0c;-webkit-text-stroke:0.6px #111;transform:scaleX(.95);transform-origin:left">Iris data set</div>
<div class="abs" style="left:377.6px;top:340.8px;width:7.2px;height:7.2px;background:#107c41;border:1.2px solid #fff"></div>
<div class="abs" style="left:2012px;top:272px;width:28px;height:1253.2px;background:#f0f0f0"></div>
<div class="abs" style="left:2018px;top:278px;width:0;height:0;border-left:6.8px solid transparent;border-right:6.8px solid transparent;border-bottom:9.2px solid #4a4a4a"></div>
<div class="abs" style="left:2018.4px;top:296px;width:12.8px;height:324px;border-radius:6px;background:linear-gradient(90deg,#5a5a5a,#7d7d7d)"></div>
<div class="abs" style="left:2018px;top:1507.2px;width:0;height:0;border-left:6.8px solid transparent;border-right:6.8px solid transparent;border-top:9.2px solid #4a4a4a"></div>
<div class="abs" style="left:68px;top:1525.2px;width:1972px;height:44.4px;background:#e9edf0"></div>
<svg class="abs" style="left:108px;top:1539.2px" width="10.4" height="16" viewBox="0 0 5 8"><path d="M4 1 L1 4 L4 7" fill="none" stroke="#9c9c9c" stroke-width="1"/></svg>
<svg class="abs" style="left:155.2px;top:1539.2px" width="10.4" height="16" viewBox="0 0 5 8"><path d="M1 1 L4 4 L1 7" fill="none" stroke="#9c9c9c" stroke-width="1"/></svg>
<div class="t" style="left:243.6px;top:1537.2px;font-size:19.2px;color:#3a3a3a">Sheet1</div>
<div class="abs" style="left:332px;top:1525.2px;width:244px;height:44.4px;background:#fff"></div>
<div class="t" style="left:342.4px;top:1536px;font-size:19px;color:#1b3527;font-weight:bold;letter-spacing:-0.32px">Pandas Describe Sample</div>
<div class="abs" style="left:342.4px;top:1558px;width:221.6px;height:3.2px;background:#5c9577"></div>
<svg class="abs" style="left:642.8px;top:1538.8px" width="16.8" height="16.8" viewBox="0 0 8 8"><path d="M4 .5 V7.5 M.5 4 H7.5" stroke="#6a6a6a" stroke-width="1.1"/></svg>
<div class="abs" style="left:1252.4px;top:1540.8px;width:2.8px;height:2.8px;background:#888"></div><div class="abs" style="left:1252.4px;top:1546.4px;width:2.8px;height:2.8px;background:#888"></div><div class="abs" style="left:1252.4px;top:1552px;width:2.8px;height:2.8px;background:#888"></div>
<div class="abs" style="left:1285.6px;top:1540.8px;width:0;height:0;border-top:6.8px solid transparent;border-bottom:6.8px solid transparent;border-right:9.2px solid #4a4a4a"></div>
<div class="abs" style="left:1303.2px;top:1541.6px;width:667.2px;height:12px;border-radius:6px;background:linear-gradient(180deg,#5a5a5a,#7a7a7a)"></div>
<div class="abs" style="left:1995.6px;top:1540.8px;width:0;height:0;border-top:6.8px solid transparent;border-bottom:6.8px solid transparent;border-left:9.2px solid #4a4a4a"></div>
<div class="abs" style="left:68px;top:1569.6px;width:2764px;height:44px;background:#f4f4f4;border-top:2.4px solid #dadada"></div>
<div class="t" style="left:84.8px;top:1580.4px;font-size:15px;color:#2e2e2e">Ready</div>
<svg class="abs" style="left:155.2px;top:1577.6px" width="20" height="19.2" viewBox="0 0 10 9"><rect x=".7" y=".7" width="8.6" height="7.6" fill="none" stroke="#3a3a3a" stroke-width="1.3"/><path d="M.6 3 H9.4 M.6 5.6 H9.4 M3.6 .6 V8.4" stroke="#3a3a3a" stroke-width="1.2"/></svg>
<svg class="abs" style="left:202.4px;top:1576.4px" width="20.8" height="20.8" viewBox="0 0 10 10"><circle cx="5" cy="1.7" r="1.3" fill="#3a3a3a"/><path d="M1 3.8 H9 M3.4 3.8 V9.4 M6.6 3.8 V9.4 M3.4 6.6 H6.6 M1.5 9.4 H8.5" stroke="#3a3a3a" stroke-width="1.1" fill="none"/></svg>
<div class="t" style="left:229.6px;top:1580.4px;font-size:15.48px;color:#222;font-weight:bold;letter-spacing:-0.2px">Accessibility: Investigate</div>
<div class="abs" style="left:2400.8px;top:1571.6px;width:54.4px;height:31.2px;background:#dcdcdc"></div>
<svg class="abs" style="left:2415.2px;top:1577.2px" width="24" height="20" viewBox="0 0 12 10"><rect x=".7" y=".7" width="10.6" height="8.6" fill="none" stroke="#3c3c3c" stroke-width="1.3"/><path d="M.7 3.6 H11.3 M.7 6.4 H11.3 M4.3 .7 V9.3 M7.7 .7 V9.3" stroke="#3c3c3c" stroke-width="1.1"/></svg>
<svg class="abs" style="left:2473.2px;top:1577.2px" width="24" height="20" viewBox="0 0 12 10"><rect x=".7" y=".7" width="10.6" height="8.6" fill="none" stroke="#3c3c3c" stroke-width="1.3"/><rect x="3" y="2.4" width="6" height="5.2" fill="#3c3c3c" opacity=".75"/></svg>
<svg class="abs" style="left:2530.4px;top:1577.2px" width="24" height="20" viewBox="0 0 12 10"><rect x=".7" y=".7" width="10.6" height="8.6" fill="none" stroke="#3c3c3c" stroke-width="1.3"/><path d="M.7 4 H6.5 V.7 M6.5 4 V6" stroke="#3c3c3c" stroke-width="1.1" fill="none"/></svg>
<div class="abs" style="left:2580.8px;top:1586.4px;width:9.6px;height:2.4px;background:#777"></div>
<div class="abs" style="left:2600px;top:1586px;width:144px;height:3.2px;background:#c4c4c4"></div>
<div class="abs" style="left:2668px;top:1577.2px;width:7.2px;height:20px;background:#454545;border-radius:2px"></div>
<div class="t" style="left:2748.8px;top:1576.8px;font-size:20.8px;color:#777">+</div>
<div class="t" style="left:2782px;top:1580px;font-size:15.4px;color:#2e2e2e">100%</div>
<div class="abs" style="left:2040px;top:272px;width:792px;height:1297.6px;background:#f0f0f0"></div>
<div class="abs" style="left:2042.4px;top:272px;width:2px;height:1296px;background:#dcdcdc"></div>
<div class="t" style="left:2060px;top:294.8px;font-size:20.8px;color:#333;font-weight:bold;letter-spacing:-0.4px">Toolbox</div>
<svg class="abs" style="left:2736.8px;top:298px" width="24" height="14.8" viewBox="0 0 10 6"><path d="M1 1 L5 5 L9 1" fill="none" stroke="#444" stroke-width="1"/></svg>
<svg class="abs" style="left:2786.8px;top:295.6px" width="18.4" height="18.4" viewBox="0 0 10 10"><path d="M1 1 L9 9 M9 1 L1 9" stroke="#444" stroke-width="1.1"/></svg>
<div class="abs" style="left:2058.4px;top:334px;width:751.2px;height:1215.2px;background:#fff;border:2px solid #e2e2e2"></div>
<div class="abs" style="left:2058.4px;top:396.8px;width:751.2px;height:2.4px;background:#e6e6e6"></div>
<svg class="abs" style="left:2075.2px;top:357.2px" width="10.4" height="15.2" viewBox="0 0 5 8"><path d="M4 1 L1.2 4 L4 7" fill="none" stroke="#5c65d0" stroke-width="1.2"/></svg><div class="t" style="left:2095.6px;top:355.2px;font-size:18.12px;color:#5c65d0">Back to Code Snippets</div>
<svg class="abs" style="left:2431.6px;top:353.6px" width="20" height="20" viewBox="0 0 10 10"><path d="M5 .8 L9.5 5 V9.4 H6.2 V6.4 H3.8 V9.4 H.5 V5 Z" fill="#3c4452"/></svg>
<svg class="abs" style="left:2482.8px;top:353.6px" width="20" height="20" viewBox="0 0 10 10"><path d="M1 9.3 V7 H3 V9.3 Z M4 9.3 V4.6 H6 V9.3 Z M7 9.3 V1.5 H9 V9.3 Z" fill="#3c4452" /></svg>
<svg class="abs" style="left:2533.2px;top:352.8px" width="21.6" height="21.6" viewBox="0 0 10 10"><circle cx="3.2" cy="5" r="2" fill="#3c4452"/><circle cx="8" cy="1.8" r="1.2" fill="#3c4452"/><circle cx="8" cy="8.2" r="1.2" fill="#3c4452"/><path d="M3.2 5 L8 1.8 M3.2 5 L8 8.2" stroke="#3c4452" stroke-width=".8"/></svg>
<svg class="abs" style="left:2585.6px;top:353.2px" width="20.8" height="20.8" viewBox="0 0 10 10"><rect x=".7" y=".7" width="8.6" height="8.6" rx="1" fill="none" stroke="#3c4452" stroke-width="1.5"/><path d="M3.6 .7 V9.3 M6.4 .7 V9.3 M.7 3.8 H9.3" stroke="#3c4452" stroke-width="1.3"/></svg>
<div class="abs" style="left:2635.6px;top:352px;width:24.8px;height:24.8px;border-radius:5.2px;background:#17c964"></div>
<div class="abs" style="left:2640.4px;top:360.8px;width:6px;height:6.8px;border-radius:1.6px;background:#0e9c4a"></div><div class="abs" style="left:2649.6px;top:360.8px;width:6px;height:6.8px;border-radius:1.6px;background:#0e9c4a"></div>
<div class="abs" style="left:2692.4px;top:356.4px;width:15.2px;height:15.2px;border-radius:50%;background:#3c4452"></div>
<svg class="abs" style="left:2740.8px;top:354px" width="19.2" height="20" viewBox="0 0 10 10"><circle cx="5" cy="2.8" r="2.2" fill="#3c4452"/><path d="M1 9.5 C1 6 3 5.3 5 5.3 C7 5.3 9 6 9 9.5 Z" fill="#3c4452"/></svg>
<div class="abs" style="left:2786.4px;top:335.2px;width:2.4px;height:62px;background:#cdcdcd"></div>
<svg class="abs" style="left:2795.2px;top:358.4px" width="8.8" height="12.8" viewBox="0 0 5 8"><path d="M4 1 L1.2 4 L4 7" fill="none" stroke="#8a8a8a" stroke-width="1.1"/></svg>
<div class="t" style="left:2090px;top:431.6px;font-size:24px;color:#1f1f1f;font-weight:bold;letter-spacing:-0.2px">New Code Snippet</div>
<div class="t lbl" style="left:2090.4px;top:487.6px">Project</div>
<div class="abs" style="left:2089.6px;top:519.2px;width:668px;height:54px;border:2px solid #e6e6e6;border-radius:8px;background:#fff"></div>
<svg class="abs" style="left:2099.6px;top:536.8px" width="27.6" height="22" viewBox="0 0 11 9"><path d="M.7 1.5 Q.7 .7 1.5 .7 H4 L5 2 H9.5 Q10.3 2 10.3 2.8 V7.5 Q10.3 8.3 9.5 8.3 H1.5 Q.7 8.3 .7 7.5 Z" fill="none" stroke="#555" stroke-width=".9"/></svg>
<div class="t" style="left:2139.6px;top:538px;font-size:21.8px;color:#3d3d3d">Anaconda Toolbox - Team Shared Snippets</div>
<div class="abs" style="left:2092px;top:582.8px;width:13.6px;height:13.6px;border-radius:50%;background:#1c8a45"></div>
<div class="t" style="left:2112px;top:580.4px;font-size:18.8px;color:#7a7a7a">Permission to write</div>
<div class="t lbl" style="left:2089.6px;top:620.4px">Snippet Title</div>
<div class="abs" style="left:2089.6px;top:650.4px;width:668px;height:54px;border:2.4px solid #c3e0cd;border-bottom:5.6px solid #a6dfbd;border-radius:8px;background:#fff;box-shadow:0 0 3.2px rgba(0,0,0,.15)"></div>
<div class="t" style="left:2108px;top:669.6px;font-size:20.8px;color:#484848">Iris Bar Chart</div>
<div class="t lbl" style="left:2089.6px;top:733.6px">Language</div>
<div class="t" style="left:2107.2px;top:777.6px;font-size:20.96px;color:#444">Python</div>
<svg class="abs" style="left:2183.6px;top:783.2px" width="20.8" height="13.2" viewBox="0 0 10 6"><path d="M1 1 L5 5 L9 1" fill="none" stroke="#5a5a5a" stroke-width="1"/></svg>
<div class="abs" style="left:2089.6px;top:806px;width:133.6px;height:2.2px;background:#3a3a3a"></div>
<svg class="abs" style="left:2570.8px;top:779.6px" width="17.6" height="17.6" viewBox="0 0 8 8"><path d="M4 .6 V7.4 M.6 4 H7.4" stroke="#6b70c6" stroke-width="1.5"/></svg><div class="t" style="left:2603.6px;top:777.6px;font-size:20.8px;color:#686dc4">Add From Grid</div>
<div class="abs" style="left:2090.4px;top:836px;width:666.4px;height:601.6px;background:#1e1e1e"></div>
<div class="abs" style="left:2090.4px;top:838.4px;width:666.4px;height:28px;background:#2a2a2a"></div>
<div class="code" style="top:841.04px"><span class="k">import</span> <span class="v">seaborn</span> <span class="b">as</span> <span class="v">sns</span>
<span class="k">import</span> <span class="v">matplotlib.pyplot</span> <span class="b">as</span> <span class="v">plt</span>

<span class="v">df</span> = <span class="f">xl</span>(<span class="s">"IrisDataSet[#All]"</span>, <span class="v">headers</span>=<span class="b">True</span>)

<span class="v">ax</span> = <span class="v">sns.barplot</span>(
    <span class="v">data</span>=<span class="v">df</span>,
    <span class="v">x</span>=<span class="s">'species'</span>,
    <span class="v">y</span>=<span class="s">'sepal_length'</span>,
    <span class="v">estimator</span>=<span class="s">'mean'</span>,
    <span class="v">hue</span>=<span class="s">'species'</span>,
    <span class="v">errorbar</span>=<span class="b">None</span>,
    <span class="v">palette</span>=<span class="s">'Accent'</span>,
)

<span class="v">plt.title</span>(<span class="s">'Sepal Length by Sepal Width'</span>)
<span class="v">plt.xlabel</span>(<span class="s">'species'</span>)
<span class="v">plt.ylabel</span>(<span class="s">'sepal_length'</span>)
<span class="v">ax.spines</span>[<span class="s">'top'</span>]<span class="v">.set_visible</span>(<span class="b">False</span>)
<span class="v">ax.spines</span>[<span class="s">'right'</span>]<span class="v">.set_visible</span>(<span class="b">False</span>)
<span class="v">ax.spines</span>[<span class="s">'bottom'</span>]<span class="v">.set_visible</span>(<span class="b">True</span>)</div>
<div class="ln" style="top:841.04px"><span style="color:#e0e0e0">1</span>
2
3
4
5
6
7
8
9
10
11
12
13
14
15
16
17
18
19
20
21</div>
<div class="abs" style="left:2777.2px;top:435.6px;width:14px;height:650.4px;border-radius:6.8px;background:linear-gradient(90deg,#686868,#8e8e8e)"></div>
<div class="abs" style="left:2777.6px;top:417.2px;width:0;height:0;border-left:6.8px solid transparent;border-right:6.8px solid transparent;border-bottom:9.2px solid #555"></div>
<div class="abs" style="left:2777.6px;top:1424px;width:0;height:0;border-left:6px solid transparent;border-right:6px solid transparent;border-top:8px solid #666"></div>
<div class="abs" style="left:2061.6px;top:1448.8px;width:747.2px;height:2.4px;background:#e4e4e4"></div>
<div class="abs" style="left:2087.2px;top:1478px;width:696px;height:45.6px;border-radius:5.2px;background:#08c45a"></div>
<div class="t" style="left:2349.2px;top:1490.4px;font-size:20.4px;font-weight:bold;color:#11673a">Save to Cloud</div>
<svg class="abs" style="left:2494.4px;top:1489.6px" width="25.6" height="22.4" viewBox="0 0 12 10"><path d="M3 7.5 C.8 7.5 .6 4.6 2.8 4.2 C3 1.5 7 1 7.8 3.6 C10.2 3.4 10.6 6.6 9 7.4" fill="none" stroke="#11673a" stroke-width="1.3"/><circle cx="8.4" cy="7.4" r="2.2" fill="#11673a"/></svg>
</div></div></div></div>
</body></html>
